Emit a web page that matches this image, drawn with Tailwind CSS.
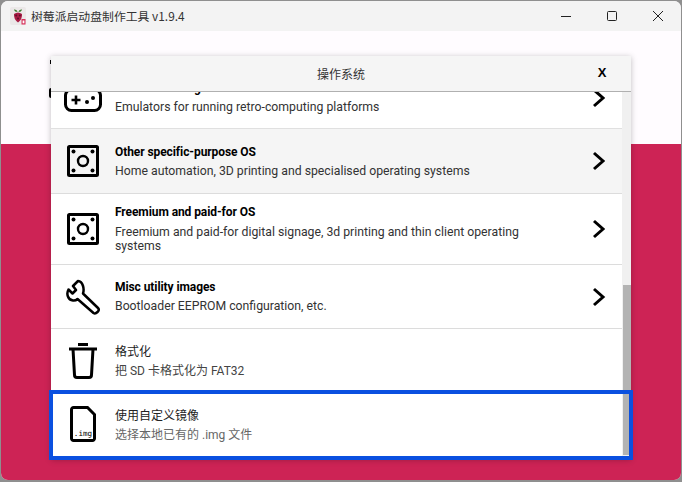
<!DOCTYPE html>
<html lang="en">
  <head>
    <meta charset="UTF-8" />
    <title>Raspberry Pi Imager</title>
    <script src="https://cdn.jsdelivr.net/npm/@tailwindcss/browser@4"></script>
  </head>
  <body class="w-[682px] h-[482px] overflow-hidden bg-[#8f8f8f] pl-[1px] pt-[1px] font-['Roboto','Noto_Sans_CJK_SC',sans-serif]">
    <!-- window -->
    <div class="relative w-[680px] h-[479px] rounded-[7px] overflow-hidden flex flex-col bg-[#fffcff]">
      <!-- title bar -->
      <div class="h-[30px] shrink-0 bg-[#f3f3f3] flex items-center pl-[9px]">
        <svg class="w-[16px] h-[18px]" viewBox="0 0 16 18">
          <rect x="0" y="0" width="16" height="18" rx="2" fill="#ebe8e8" />
          <path d="M4 2.5 Q7 2 7.6 5 Q4.5 5 4 2.5ZM12 2.5 Q9 2 8.4 5 Q11.5 5 12 2.5Z" fill="#3f7d33" />
          <path d="M4 7 Q8 4 12 7 Q12.5 12 8 15.5 Q3.5 12 4 7Z" fill="#a81c44" />
          <circle cx="6.2" cy="8.6" r="1" fill="#5e1029" />
          <circle cx="9.8" cy="8.6" r="1" fill="#5e1029" />
          <circle cx="8" cy="11.6" r="1" fill="#5e1029" />
          <rect x="11.5" y="12" width="4" height="5.5" fill="#d8315b" />
          <rect x="12.6" y="13.5" width="1.8" height="2.8" fill="#fff" />
        </svg>
        <div class="ml-[5px] text-[11.85px] text-[#333] font-['Noto_Sans_CJK_SC','Roboto',sans-serif]">树莓派启动盘制作工具 v1.9.4</div>
        <div class="ml-auto mr-[-6px] flex items-center">
          <svg class="w-[46px] h-[30px]" viewBox="0 0 46 30"><path d="M12 15.5h10" stroke="#222" stroke-width="1" /></svg>
          <svg class="w-[46px] h-[30px]" viewBox="0 0 46 30"><rect x="12.5" y="10.5" width="9" height="9" rx="1" fill="none" stroke="#222" stroke-width="1" /></svg>
          <svg class="w-[46px] h-[30px]" viewBox="0 0 46 30"><path d="M12 10l10 10M22 10l-10 10" stroke="#222" stroke-width="1" /></svg>
        </div>
      </div>
      <!-- app body -->
      <div class="h-[113px] shrink-0 bg-[#fffcff]"></div>
      <div class="flex-1 bg-[#cd2355]"></div>

      <!-- text behind the dialog, only its edge shows -->
      <div class="absolute left-[49px] top-[59px] w-[1px] h-[4px] bg-black"></div>
      <div class="absolute left-[48px] top-[87px] w-[2px] h-[10px] rounded-l-full bg-black"></div>

      <!-- dialog -->
      <div class="absolute left-[50px] top-[55px] w-[580px] h-[403px] bg-white shadow-[0_1px_6px_rgba(0,0,0,0.25)] flex flex-col">
        <div class="h-[36px] shrink-0 bg-[#f5f5f5] border-b border-[#b0b0b0] flex items-center">
          <div class="flex-1 text-center text-[12px] text-[#333] pl-[58px] font-['Noto_Sans_CJK_SC',sans-serif]">操作系统</div>
          <div class="w-[58px] text-center text-[13px] font-bold text-black font-['Liberation_Sans',sans-serif] pb-[2px]">X</div>
        </div>
        <div class="flex-1 min-h-0 flex">
          <!-- list -->
          <div class="flex-1 min-w-0 overflow-hidden">
            <div class="mt-[-27px]">
              <div class="h-[64px] flex items-center border-b border-[#e0e0e0]">
                <div class="w-[64px] flex justify-center pt-[6px]">
                  <svg class="w-[38px] h-[24px]" viewBox="0 0 38 24" fill="none">
                    <rect x="1.5" y="1.5" width="35" height="21" rx="6" stroke="#000" stroke-width="3" />
                    <path d="M12 7.5v9M7.5 12h9" stroke="#000" stroke-width="2.6" />
                    <circle cx="23" cy="14" r="2" fill="#000" />
                    <circle cx="29" cy="10" r="2" fill="#000" />
                  </svg>
                </div>
                <div class="flex-1 pt-[2px]">
                  <div class="text-[12px] tracking-[-0.08px] font-bold leading-[19px] text-black">Emulation and game OS</div>
                  <div class="text-[12.25px] leading-[19px] text-[#333]">Emulators for running retro-computing platforms</div>
                </div>
                <svg class="w-[14px] h-[20px] mr-[16px] mt-[2px]" viewBox="0 0 14 20" fill="none"><path d="M2 2l9 8-9 8" stroke="#000" stroke-width="3" /></svg>
              </div>

              <div class="h-[65px] flex items-center border-b border-[#dcdcdc] bg-[#f5f5f5]">
                <div class="w-[64px] flex justify-center">
                  <svg class="w-[32px] h-[32px]" viewBox="0 0 32 32" fill="none">
                    <rect x="1.5" y="1.5" width="29" height="29" rx="1" stroke="#000" stroke-width="3" />
                    <circle cx="16" cy="16" r="5" stroke="#000" stroke-width="2.4" />
                    <circle cx="6.5" cy="6.5" r="2" fill="#000" />
                    <circle cx="25.5" cy="6.5" r="2" fill="#000" />
                    <circle cx="6.5" cy="25.5" r="2" fill="#000" />
                    <circle cx="25.5" cy="25.5" r="2" fill="#000" />
                  </svg>
                </div>
                <div class="flex-1 pt-[2px]">
                  <div class="text-[12px] tracking-[-0.08px] font-bold leading-[19px] text-black">Other specific-purpose OS</div>
                  <div class="text-[12.25px] leading-[19px] text-[#333]">Home automation, 3D printing and specialised operating systems</div>
                </div>
                <svg class="w-[14px] h-[20px] mr-[16px]" viewBox="0 0 14 20" fill="none"><path d="M2 2l9 8-9 8" stroke="#000" stroke-width="3" /></svg>
              </div>

              <div class="h-[71px] flex items-center border-b border-[#dcdcdc]">
                <div class="w-[64px] flex justify-center">
                  <svg class="w-[32px] h-[32px]" viewBox="0 0 32 32" fill="none">
                    <rect x="1.5" y="1.5" width="29" height="29" rx="1" stroke="#000" stroke-width="3" />
                    <circle cx="16" cy="16" r="5" stroke="#000" stroke-width="2.4" />
                    <circle cx="6.5" cy="6.5" r="2" fill="#000" />
                    <circle cx="25.5" cy="6.5" r="2" fill="#000" />
                    <circle cx="6.5" cy="25.5" r="2" fill="#000" />
                    <circle cx="25.5" cy="25.5" r="2" fill="#000" />
                  </svg>
                </div>
                <div class="flex-1 pb-[3px]">
                  <div class="text-[12px] tracking-[-0.08px] font-bold leading-[19px] text-black">Freemium and paid-for OS</div>
                  <div class="text-[12.25px] leading-[14px] mt-[3px] w-[440px] text-[#333]">Freemium and paid-for digital signage, 3d printing and thin client operating systems</div>
                </div>
                <svg class="w-[14px] h-[20px] mr-[16px]" viewBox="0 0 14 20" fill="none"><path d="M2 2l9 8-9 8" stroke="#000" stroke-width="3" /></svg>
              </div>

              <div class="h-[64px] flex items-center border-b border-[#dcdcdc]">
                <div class="w-[64px] flex justify-center">
                  <svg class="w-[36px] h-[36px]" viewBox="0 0 36 36" fill="none">
                    <path d="M13 2 L8 7 L11 11 L7.5 14.5 L3.5 10.5 C1 15 3 21 8 21.5 C10 21.7 11.5 21 12.5 20 L28.5 34 C30 35 31 34.5 32.5 33 C34 31.5 34 30 33 29 L18 14.5 C19.5 10 18 2.5 13 2 Z" stroke="#000" stroke-width="2.5" stroke-linejoin="round" />
                  </svg>
                </div>
                <div class="flex-1 pt-[1px]">
                  <div class="text-[12px] tracking-[-0.08px] font-bold leading-[19px] text-black">Misc utility images</div>
                  <div class="text-[12.25px] leading-[19px] text-[#333]">Bootloader EEPROM configuration, etc.</div>
                </div>
                <svg class="w-[14px] h-[20px] mr-[16px]" viewBox="0 0 14 20" fill="none"><path d="M2 2l9 8-9 8" stroke="#000" stroke-width="3" /></svg>
              </div>

              <div class="h-[63px] flex items-center">
                <div class="w-[64px] flex justify-center">
                  <svg class="w-[28px] h-[36px]" viewBox="0 0 28 36" fill="none">
                    <path d="M0 6h28M9 1.5h10" stroke="#000" stroke-width="3" />
                    <path d="M4 6l1.5 26c0 1.5 1 2.5 2.5 2.5h12c1.5 0 2.5-1 2.5-2.5L24 6" stroke="#000" stroke-width="3" />
                  </svg>
                </div>
                <div class="flex-1 pt-[2px]">
                  <div class="text-[12px] leading-[19px] text-[#222]">格式化</div>
                  <div class="text-[12px] leading-[19px] text-[#444]">把 SD 卡格式化为 FAT32</div>
                </div>
              </div>

              <div class="h-[67px] flex items-center">
                <div class="w-[64px] flex justify-center pb-[3px]">
                  <svg class="w-[26px] h-[36px]" viewBox="0 0 26 36" fill="none">
                    <path d="M1.5 3.5c0-1 1-2 2-2h14l7 7v24c0 1-1 2-2 2h-19c-1 0-2-1-2-2z" stroke="#000" stroke-width="3" />
                    <text x="13" y="30" text-anchor="middle" font-family="DejaVu Sans Mono" font-size="7.6" fill="#000">.img</text>
                  </svg>
                </div>
                <div class="flex-1">
                  <div class="text-[12px] leading-[19px] text-[#222]">使用自定义镜像</div>
                  <div class="text-[12px] leading-[19px] text-[#666]">选择本地已有的 .img 文件</div>
                </div>
              </div>
            </div>
          </div>
          <!-- scrollbar -->
          <div class="w-[9px] shrink-0 bg-[#f0f0f0] pt-[193px] pl-[1px]">
            <div class="w-[8px] h-[170px] bg-[#b3b3b3]"></div>
          </div>
        </div>
      </div>

      <!-- keyboard focus frame on the last row -->
      <div class="absolute left-[48px] top-[389px] w-[584px] h-[70px] border-[4px] border-[#0a50e0]"></div>
    </div>
  </body>
</html>
